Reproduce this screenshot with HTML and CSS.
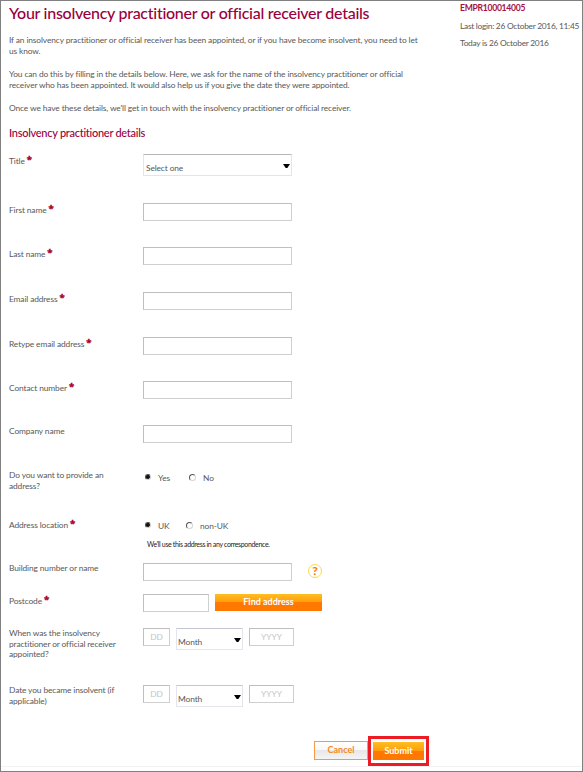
FILE: index.html
```html
<!DOCTYPE html>
<html lang="en">

<head>
    <meta charset="UTF-8">
    <meta name="viewport" content="width=device-width, initial-scale=1.0">
    <title>Your insolvency practitioner or official receiver details</title>
    <link rel="stylesheet" href="styles.css">
</head>

<body>
    <div class="page">
        <div class="top">
            <div class="intro">
                <h1>Your insolvency practitioner or official receiver details</h1>
                <p>If an insolvency practitioner or official receiver has been appointed, or if you have become insolvent, you need to let<br>us know.</p>
                <p>You can do this by filling in the details below. Here, we ask for the name of the insolvency practitioner or official<br>receiver who has been appointed. It would also help us if you give the date they were appointed.</p>
                <p>Once we have these details, we'll get in touch with the insolvency practitioner or official receiver.</p>
                <h2>Insolvency practitioner details</h2>
            </div>
            <div class="account">
                <div class="account-id">EMPR100014005</div>
                <div>Last login: 26 October 2016, 11:45</div>
                <div>Today is 26 October 2016</div>
            </div>
        </div>

        <form>
            <div class="row row-title">
                <label>Title<sup>*</sup></label>
                <div class="select">Select one<svg class="arrow" viewBox="0 0 7 4"><path d="M0 0h7L4.3 4H2.7z"/></svg></div>
            </div>
            <div class="row">
                <label>First name<sup>*</sup></label>
                <input type="text">
            </div>
            <div class="row tall">
                <label>Last name<sup>*</sup></label>
                <input type="text">
            </div>
            <div class="row tall">
                <label>Email address<sup>*</sup></label>
                <input type="text">
            </div>
            <div class="row">
                <label>Retype email address<sup>*</sup></label>
                <input type="text">
            </div>
            <div class="row">
                <label>Contact number<sup>*</sup></label>
                <input type="text">
            </div>
            <div class="row tall company">
                <label>Company name</label>
                <input type="text">
            </div>
            <div class="row row-provide">
                <label>Do you want to provide an<br>address?</label>
                <div class="radios">
                    <span class="radio on"></span><span class="yes">Yes</span>
                    <span class="radio"></span><span>No</span>
                </div>
            </div>
            <div class="row row-location">
                <label>Address location<sup>*</sup></label>
                <div>
                    <div class="radios">
                        <span class="radio on"></span><span class="uk">UK</span>
                        <span class="radio"></span><span>non-UK</span>
                    </div>
                    <div class="note">We'll use this address in any correspondence.</div>
                </div>
            </div>
            <div class="row row-building">
                <label>Building number or name</label>
                <input type="text">
                <span class="help">?</span>
            </div>
            <div class="row row-postcode">
                <label>Postcode<sup>*</sup></label>
                <input type="text" class="postcode">
                <button type="button" class="btn find">Find address</button>
            </div>
            <div class="row row-appointed">
                <label>When was the insolvency<br>practitioner or official receiver<br>appointed?</label>
                <div class="date">
                    <input type="text" class="day" placeholder="DD">
                    <div class="select month">Month<svg class="arrow" viewBox="0 0 7 4"><path d="M0 0h7L4.3 4H2.7z"/></svg></div>
                    <input type="text" class="year" placeholder="YYYY">
                </div>
            </div>
            <div class="row row-insolvent">
                <label>Date you became insolvent (if<br>applicable)</label>
                <div class="date">
                    <input type="text" class="day" placeholder="DD">
                    <div class="select month">Month<svg class="arrow" viewBox="0 0 7 4"><path d="M0 0h7L4.3 4H2.7z"/></svg></div>
                    <input type="text" class="year" placeholder="YYYY">
                </div>
            </div>
            <div class="actions">
                <button type="button" class="btn cancel">Cancel</button>
                <div class="highlight"><button type="button" class="btn submit">Submit</button></div>
            </div>
        </form>
    </div>
</body>

</html>
```

FILE: styles.css
```css
* {
    box-sizing: border-box;
}
body {
    margin: 0;
    font-family: "Trebuchet MS", Lato, sans-serif;
    font-size: 8.4px;
    line-height: 10.5px;
    letter-spacing: -0.12px;
    color: #585858;
    background: #fff;
}
.page {
    width: 583px;
    height: 772px;
    border: 1px solid #808080;
    overflow: hidden;
}
.top {
    display: flex;
    height: 153px;
}
.intro {
    flex: none;
    width: 459px;
    padding-left: 8px;
    white-space: nowrap;
}
h1 {
    margin: 3px 0 0;
    font-size: 16px;
    letter-spacing: -0.27px;
    line-height: 18px;
    font-weight: 500;
    color: #99003d;
}
p {
    margin: 0;
    padding-top: 13px;
}
h2 {
    margin: 11px 0 0;
    font-size: 11px;
    letter-spacing: -0.27px;
    line-height: 16px;
    font-weight: 500;
    color: #99003d;
}
.account {
    padding-top: 1px;
    letter-spacing: -0.28px;
    line-height: 17px;
    white-space: nowrap;
}
.account-id {
    color: #a8103f;
    font-size: 8.6px;
    font-weight: 700;
    line-height: 13px;
    margin-bottom: 3px;
}

/* form rows */
.row {
    display: flex;
    height: 44px;
    padding-left: 8px;
}
.row.tall {
    height: 45px;
}
.row-title {
    height: 49px;
}
.row label {
    width: 134px;
    flex: none;
    padding-top: 2px;
    white-space: nowrap;
}
.row.company label {
    padding-top: 1px;
}
sup {
    margin-left: 2px;
    font-family: "Open Sans", sans-serif;
    font-size: 9.5px;
    font-weight: 800;
    line-height: 0;
    vertical-align: 1px;
    color: #a8002f;
    -webkit-text-stroke: 0.3px #a8002f;
}
input {
    width: 149px;
    height: 18px;
    padding: 0;
    border: 1px solid #bfbfbf;
    border-right-color: #cfcfcf;
    border-bottom-color: #cfcfcf;
    background: #fff;
    font: inherit;
    text-align: center;
}
input::placeholder {
    color: #c4c4c4;
}
.select {
    display: flex;
    justify-content: space-between;
    width: 149px;
    height: 22px;
    padding: 8px 1px 0 2px;
    border: 1px solid #e2e5ee;
    border-top-color: #b5b5b5;
    border-radius: 1px;
}
.arrow {
    width: 7px;
    height: 4px;
    margin-top: 1px;
    fill: #000;
}
.row-provide {
    height: 48px;
}
.row-provide label {
    padding-top: 0;
}
.radios {
    display: flex;
    align-items: center;
    height: 16px;
    padding-left: 2px;
}
.radio {
    width: 7px;
    height: 7px;
    margin: 0 7px 2px 1px;
    border: 1px solid #d5d5d5;
    border-top-color: #555;
    border-left-color: #555;
    border-radius: 50%;
}
.radio.on {
    width: 6px;
    height: 6px;
    margin-left: 0;
    background: #111;
}
.yes {
    width: 30px;
}
.uk {
    width: 27px;
}
.row-location {
    height: 45px;
}
.note {
    margin: 5px 0 0 4px;
    font-size: 7px;
    letter-spacing: -0.35px;
    line-height: 10px;
    color: #222;
    white-space: nowrap;
}
.row-building {
    height: 31px;
}
.row-building label {
    padding-top: 0;
}
.help {
    width: 14px;
    height: 14px;
    margin: 1px 0 0 16px;
    border: 1px solid #f7dc4d;
    border-radius: 50%;
    color: #ff7b00;
    font-size: 12px;
    font-weight: 900;
    line-height: 12px;
    text-align: center;
}
.row-postcode {
    height: 34px;
}
.row-postcode .postcode {
    width: 66px;
}
.btn {
    padding: 0;
    border: 0;
    font: inherit;
    font-weight: 700;
    text-align: center;
    color: #fff;
    background: linear-gradient(#ffbe23 0%, #ff9e0c 48%, #ff7800 50%, #ff7900 100%);
}
.find {
    width: 107px;
    height: 17px;
    margin-left: 6px;
    font-size: 9px;
}
.row-appointed {
    height: 57px;
}
.row-appointed label,
.row-insolvent label {
    padding-top: 0;
}
.row-insolvent {
    height: 51px;
}
.date {
    display: flex;
    gap: 6px;
}
.day {
    width: 27px;
}
.month {
    width: 67px;
    padding-left: 1px;
    border-top-color: #c3c5d0;
}
.year {
    width: 45px;
}

/* bottom buttons */
.actions {
    display: flex;
    height: 31px;
    padding-left: 313px;
    border-bottom: 1px solid #f2f2f2;
}
.cancel {
    width: 54px;
    height: 19px;
    margin-top: 5px;
    border: 1px solid #f79a45;
    color: #f58a25;
    font-size: 9px;
    background: linear-gradient(#fff 0%, #f8f8f8 48%, #e8e8e8 50%, #f4f4f4 100%);
}
.highlight {
    width: 61px;
    height: 30px;
    border: 3px solid #ed1c24;
    padding: 3px 2px;
}
.submit {
    display: block;
    width: 51px;
    height: 18px;
    font-size: 9px;
}
```
